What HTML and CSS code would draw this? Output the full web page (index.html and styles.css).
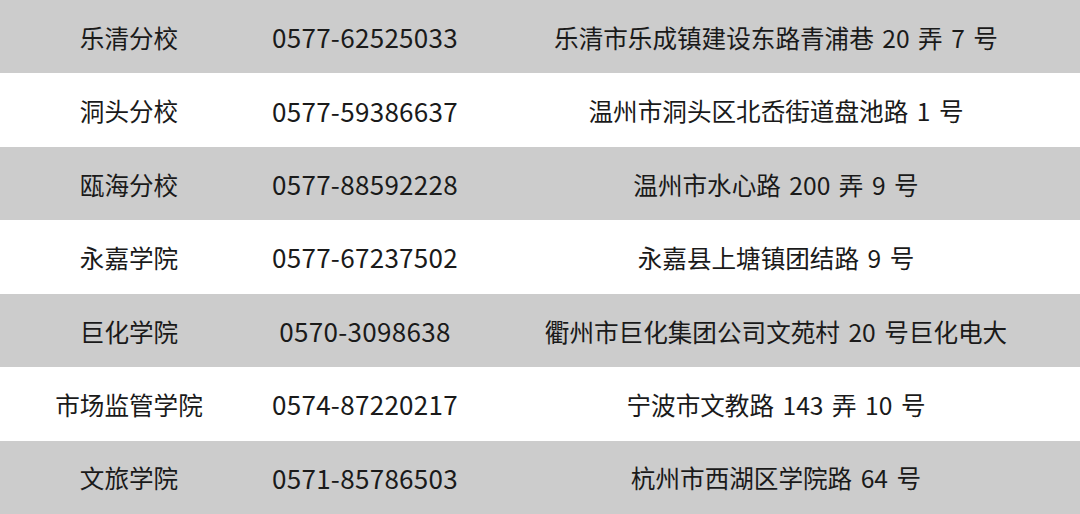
FILE: index.html
```html
<!DOCTYPE html>
<html lang="zh-CN">
<head>
<meta charset="utf-8">
<title>分校联系方式</title>
<link rel="stylesheet" href="styles.css">
</head>
<body>
<div class="table">
  <div class="row grey"><div class="c name">乐清分校</div><div class="c tel">0577-62525033</div><div class="c addr">乐清市乐成镇建设东路青浦巷 20 弄 7 号</div></div>
  <div class="row"><div class="c name">洞头分校</div><div class="c tel">0577-59386637</div><div class="c addr">温州市洞头区北岙街道盘池路 1 号</div></div>
  <div class="row grey"><div class="c name">瓯海分校</div><div class="c tel">0577-88592228</div><div class="c addr">温州市水心路 200 弄 9 号</div></div>
  <div class="row"><div class="c name">永嘉学院</div><div class="c tel">0577-67237502</div><div class="c addr">永嘉县上塘镇团结路 9 号</div></div>
  <div class="row grey"><div class="c name">巨化学院</div><div class="c tel">0570-3098638</div><div class="c addr">衢州市巨化集团公司文苑村 20 号巨化电大</div></div>
  <div class="row"><div class="c name">市场监管学院</div><div class="c tel">0574-87220217</div><div class="c addr">宁波市文教路 143 弄 10 号</div></div>
  <div class="row grey"><div class="c name">文旅学院</div><div class="c tel">0571-85786503</div><div class="c addr">杭州市西湖区学院路 64 号</div></div>
</div>
</body>
</html>
```
FILE: styles.css
```css
html, body {
  margin: 0;
  padding: 0;
  background: #ffffff;
}
body {
  font-family: "Noto Sans CJK SC", "Noto Sans", sans-serif;
  color: #1a1a1a;
}
.table {
  width: 1080px;
  height: 514px;
  display: grid;
  grid-template-rows: repeat(7, 1fr);
  overflow: hidden;
}
.row {
  display: grid;
  grid-template-columns: 258px 214px 1fr;
  align-items: center;
  background: #ffffff;
}
.row.grey {
  background: #cccccc;
}
.c {
  text-align: center;
  font-size: 24.6px;
  line-height: 1;
  white-space: nowrap;
  padding-top: 1px;
}
.tel {
  font-size: 26px;
  letter-spacing: 0.3px;
}
.addr {
  word-spacing: 3px;
}
```
